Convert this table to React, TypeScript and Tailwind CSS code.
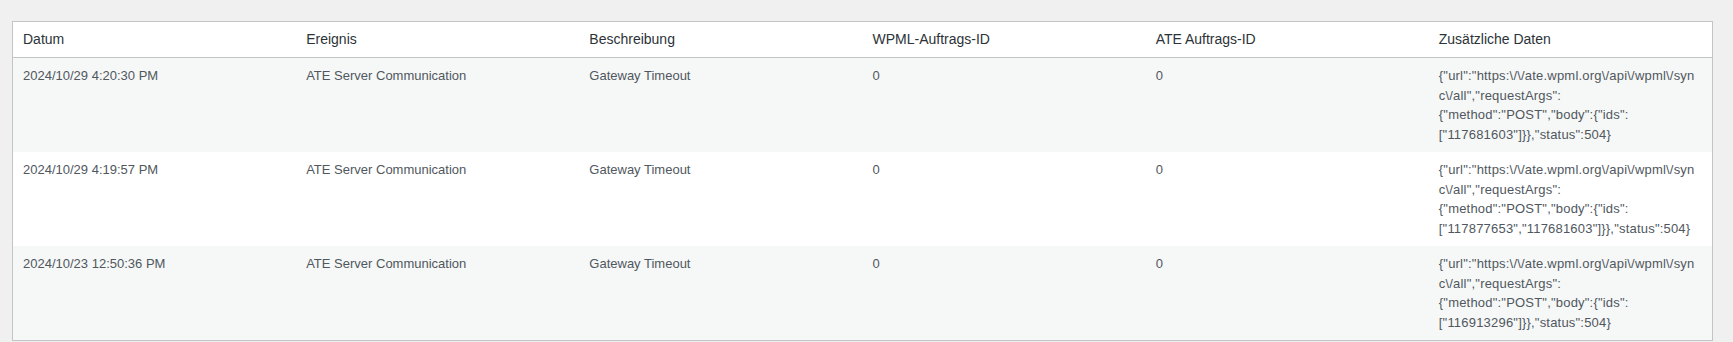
import React from "react";

const rows = [
  {
    date: "2024/10/29 4:20:30 PM",
    json: [
      '{"url":"https:\\/\\/ate.wpml.org\\/api\\/wpml\\/syn',
      'c\\/all","requestArgs":',
      '{"method":"POST","body":{"ids":',
      '["117681603"]}},"status":504}',
    ],
  },
  {
    date: "2024/10/29 4:19:57 PM",
    json: [
      '{"url":"https:\\/\\/ate.wpml.org\\/api\\/wpml\\/syn',
      'c\\/all","requestArgs":',
      '{"method":"POST","body":{"ids":',
      '["117877653","117681603"]}},"status":504}',
    ],
  },
  {
    date: "2024/10/23 12:50:36 PM",
    json: [
      '{"url":"https:\\/\\/ate.wpml.org\\/api\\/wpml\\/syn',
      'c\\/all","requestArgs":',
      '{"method":"POST","body":{"ids":',
      '["116913296"]}},"status":504}',
    ],
  },
];

const headers = [
  "Datum",
  "Ereignis",
  "Beschreibung",
  "WPML-Auftrags-ID",
  "ATE Auftrags-ID",
  "Zusätzliche Daten",
];

export default function App() {
  return (
    <div
      className="min-h-[342px] bg-[#f0f0f1] pl-[12px] pr-[20px] pt-[21px]"
      style={{ fontFamily: '"Liberation Sans", Arial, sans-serif' }}
    >
      <table className="w-full table-fixed border border-[#c3c4c7] bg-white border-separate border-spacing-0">
        <thead>
          <tr>
            {headers.map((h) => (
              <th
                key={h}
                className="border-b border-[#c3c4c7] px-[10px] py-2 text-left text-[14px] font-normal leading-[19px] text-[#2c3338]"
              >
                {h}
              </th>
            ))}
          </tr>
        </thead>
        <tbody>
          {rows.map((r, i) => (
            <tr key={i} className={i % 2 === 0 ? "bg-[#f6f7f7]" : "bg-white"}>
              <td className="px-[10px] py-2 align-top text-[13px] leading-[19.5px] text-[#50575e]">
                {r.date}
              </td>
              <td className="px-[10px] py-2 align-top text-[13px] leading-[19.5px] text-[#50575e]">
                ATE Server Communication
              </td>
              <td className="px-[10px] py-2 align-top text-[13px] leading-[19.5px] text-[#50575e]">
                Gateway Timeout
              </td>
              <td className="px-[10px] py-2 align-top text-[13px] leading-[19.5px] text-[#50575e]">
                0
              </td>
              <td className="px-[10px] py-2 align-top text-[13px] leading-[19.5px] text-[#50575e]">
                0
              </td>
              <td className="px-[10px] py-2 align-top text-[13px] leading-[19.5px] text-[#50575e]">
                {r.json.map((l, j) => (
                  <div key={j} className="whitespace-nowrap tracking-[0.2px]">
                    {l}
                  </div>
                ))}
              </td>
            </tr>
          ))}
        </tbody>
      </table>
    </div>
  );
}
